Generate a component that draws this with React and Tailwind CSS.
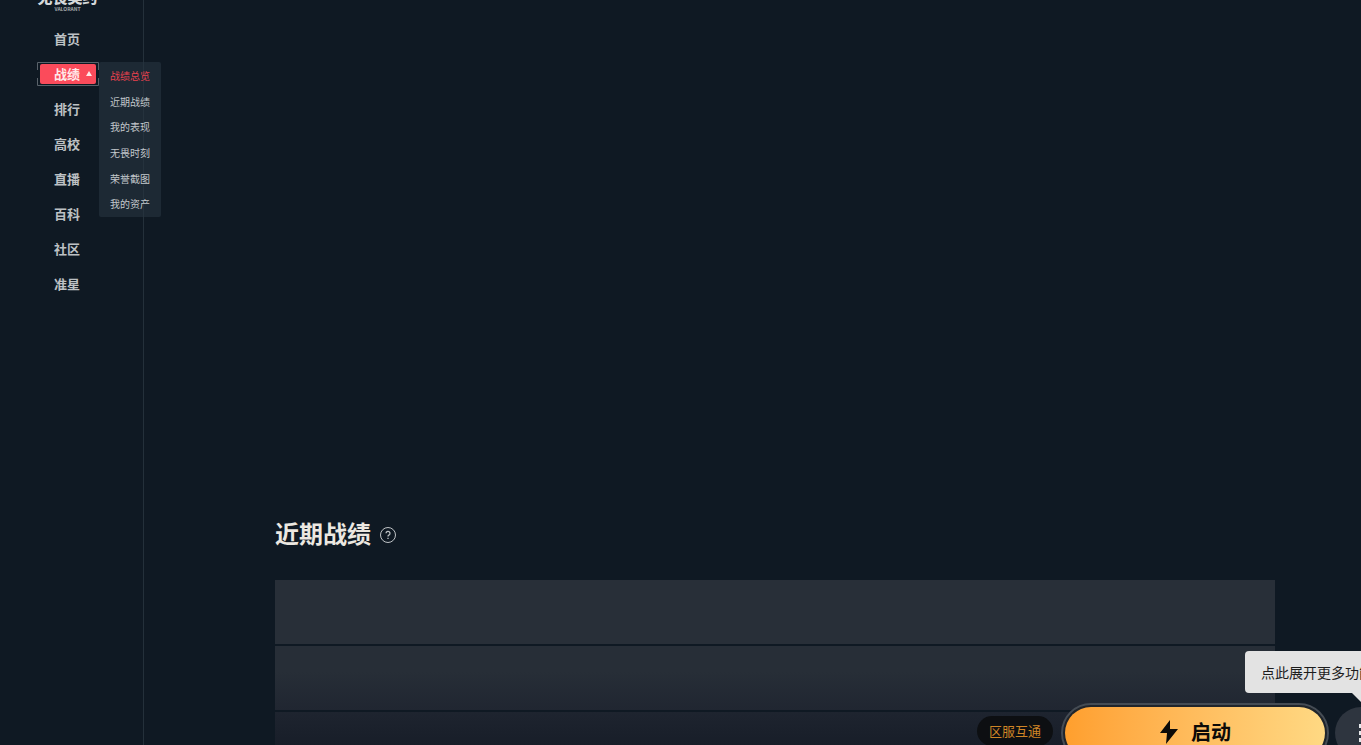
import React from "react";

const NAV = ["首页", "战绩", "排行", "高校", "直播", "百科", "社区", "准星"];
const SUB = ["战绩总览", "近期战绩", "我的表现", "无畏时刻", "荣誉截图", "我的资产"];

function Logo() {
  return (
    <div className="flex h-[11px] flex-col items-center justify-end pr-2">
      <span className="text-[15px] leading-[18px] font-black text-[#d5d8da]">无畏契约</span>
      <span className="text-[5px] leading-[5px] font-bold text-[#a3a8ac]">VALORANT</span>
    </div>
  );
}

function ActiveItem({ label }) {
  return (
    <div className="relative">
      <div className="relative ml-[37px] flex h-6 w-[62px] items-center justify-center">
        <svg className="absolute inset-0" width="62" height="24" fill="none" stroke="#59626a" aria-hidden="true">
          <path d="M.5 8V.5h61V8M.5 16v7.500h61V16" />
        </svg>
        <a
          href="#record"
          className="relative flex h-5 w-14 items-center rounded-[2px] bg-[#fb4b5b] pl-3.5 text-[13px] font-bold text-[#ffe9e9]"
        >
          {label}
          <svg className="ml-1.5" width="6" height="5" viewBox="0 0 6 5" aria-hidden="true">
            <path d="M3 0 6 5H0z" fill="#ffe9e9" />
          </svg>
        </a>
      </div>
      <ul className="absolute top-0 left-[99px] z-10 flex h-[155px] w-[62px] flex-col rounded-[2px] bg-[#263440]/60 pt-px">
        {SUB.map((s, i) => (
          <li key={s} className="flex flex-1 items-center justify-center">
            <a
              href="#sub"
              className={i === 0 ? "text-[10px] whitespace-nowrap text-[#e8414f]" : "text-[10px] whitespace-nowrap text-[#c3c8cc]"}
            >
              {s}
            </a>
          </li>
        ))}
      </ul>
    </div>
  );
}

function Sidebar() {
  return (
    <aside className="w-36 shrink-0 border-r border-[#24303a]">
      <Logo />
      <nav className="mt-2.5">
        <ul>
          {NAV.map((n, i) => (
            <li key={n} className="flex h-[35px] flex-col justify-center">
              {i === 1 ? (
                <ActiveItem label={n} />
              ) : (
                <a href="#nav" className="pl-[54px] text-[13px] font-bold text-[#bdc1c4]">
                  {n}
                </a>
              )}
            </li>
          ))}
        </ul>
      </nav>
    </aside>
  );
}

function Launcher() {
  return (
    <div className="absolute -right-[26px] -bottom-3.5 z-20 flex items-center">
      <span className="mr-3 mb-1 flex h-[30px] items-center rounded-full bg-[#0d0f12] px-3 text-[13px] text-[#cf8526]">
        区服互通
      </span>
      <button
        type="button"
        className="mr-2.5 flex h-[52px] w-[260px] items-center justify-center gap-3 rounded-full bg-linear-to-r from-[#ff9f2d] to-[#ffd983] pb-0.5 text-[20px] font-bold text-[#0c0a08] ring-2 ring-[#20252b] outline-2 outline-offset-2 outline-[#454c54]"
      >
        <svg width="20" height="26" viewBox="0 0 20 26" aria-hidden="true">
          <path d="M11 1 1 14h7L7 25 19 10h-8z" fill="currentColor" />
        </svg>
        启动
      </button>
      <div className="relative">
        <button
          type="button"
          aria-label="更多"
          className="flex size-[52px] items-center justify-center rounded-full bg-[#2e353f] text-[#e6e8ea]"
        >
          <svg width="4" height="18" viewBox="0 0 4 18" fill="currentColor" aria-hidden="true">
            <path d="M0 0h4v4H0zM0 7h4v4H0zM0 14h4v4H0z" />
          </svg>
        </button>
        <div
          role="tooltip"
          className="absolute bottom-[66px] -left-[90px] flex h-[42px] items-center rounded bg-[#e3e3e3] px-4 text-[14px] whitespace-nowrap text-[#1d1d1d]"
        >
          点此展开更多功能
          <svg className="absolute top-full left-[107px]" width="18" height="9" viewBox="0 0 18 9" aria-hidden="true">
            <path d="M0 0h18L9 9z" fill="#e3e3e3" />
          </svg>
        </div>
      </div>
    </div>
  );
}

export default function App() {
  return (
    <div className="relative flex h-screen overflow-hidden bg-[#0f1923] font-['Noto_Sans_CJK_SC',sans-serif]">
      <Sidebar />
      <main className="min-w-0 flex-1 pt-[515px] pr-[86px] pl-[131px]">
        <header className="flex h-9 items-center gap-[9px]">
          <h1 className="text-[24px] leading-9 font-bold text-[#ece8e1]">近期战绩</h1>
          <button type="button" aria-label="说明" className="mt-1 text-[#bfc3c6]">
            <svg width="16" height="16" viewBox="0 0 16 16" fill="none" stroke="currentColor" aria-hidden="true">
              <circle cx="8" cy="8" r="7.500" />
              <path d="M6 6.300a2 2 0 1 1 2.900 1.800c-.7.400-.9.700-.9 1.400" strokeWidth="1.300" />
              <path d="M8 10.800v1.300" strokeWidth="1.300" />
            </svg>
          </button>
        </header>
        <ul className="mt-[29px] flex flex-col gap-0.5">
          <li className="h-16 bg-[#282f38]" />
          <li className="h-16 bg-linear-to-b from-[#272e37] from-40% to-[#202631]" />
          <li className="h-16 bg-linear-to-b from-[#1e242f] to-[#121823]" />
        </ul>
      </main>
      <Launcher />
    </div>
  );
}
